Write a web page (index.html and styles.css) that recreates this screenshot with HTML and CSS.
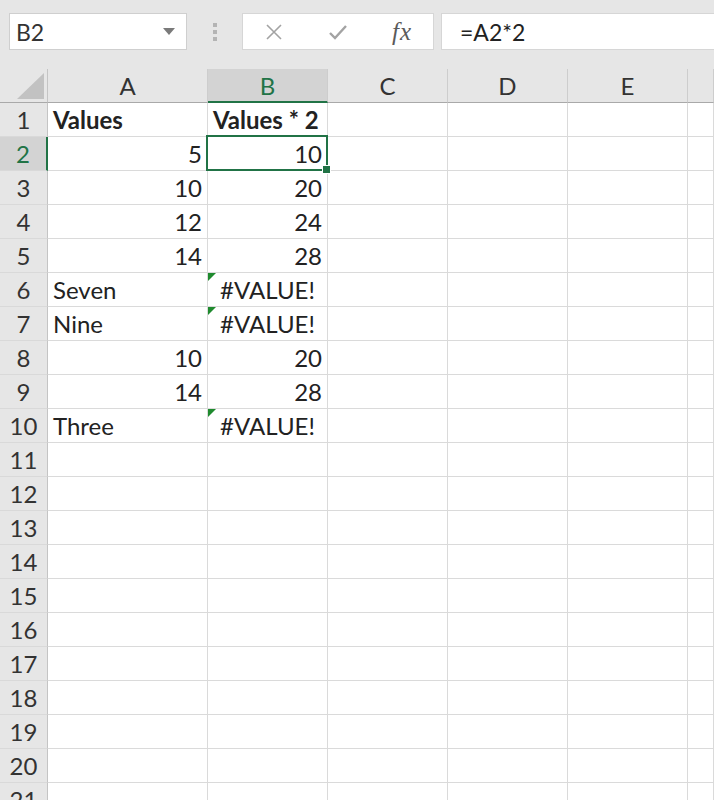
FILE: index.html
```html
<!DOCTYPE html>
<html lang="en">
<head>
  <meta charset="UTF-8">
  <title>Sheet1</title>
  <link rel="stylesheet" href="styles.css">
</head>
<body>
  <!-- formula bar -->
  <div class="toolbar">
    <div class="namebox">
      <span>B2</span>
      <svg class="caret" width="12" height="7" viewBox="0 0 12 7"><path d="M0 0h12L6 7z" fill="#7a7a7a"/></svg>
    </div>
    <div class="grip"><i></i><i></i><i></i></div>
    <div class="fx-buttons">
      <svg class="btn" width="18" height="18" viewBox="0 0 18 18"><path d="M2 2l14 14M16 2L2 16" stroke="#a3a3a3" stroke-width="1.6" fill="none"/></svg>
      <svg class="btn" width="20" height="16" viewBox="0 0 20 16"><path d="M2 9l5 5L18 2" stroke="#a3a3a3" stroke-width="2.4" fill="none"/></svg>
      <span class="fx">fx</span>
    </div>
    <div class="formula">=A2*2</div>
  </div>

  <div class="sheet">
    <div class="corner"></div>
    <div class="colhead">A</div>
    <div class="colhead active">B</div>
    <div class="colhead">C</div>
    <div class="colhead">D</div>
    <div class="colhead">E</div>
    <div class="colhead"></div>
  </div>
  <div class="sheet" id="rows"></div>

  <script>
    const data = [
      [{t: 'Values', c: 'bold'}, {t: 'Values * 2', c: 'bold'}],
      [5, 10],
      [10, 20],
      [12, 24],
      [14, 28],
      ['Seven', '#VALUE!'],
      ['Nine', '#VALUE!'],
      [10, 20],
      [14, 28],
      ['Three', '#VALUE!']
    ];

    const rows = document.getElementById('rows');
    for (let r = 1; r <= 21; r++) {
      const head = document.createElement('div');
      head.className = 'rowhead' + (r === 2 ? ' active' : '');
      head.textContent = r;
      rows.appendChild(head);

      const vals = data[r - 1] || [];
      for (let c = 0; c < 6; c++) {
        const cell = document.createElement('div');
        cell.className = 'cell';
        let v = vals[c];
        if (v && typeof v === 'object') { cell.classList.add(v.c); v = v.t; }
        if (typeof v === 'number') cell.classList.add('num');
        if (v === '#VALUE!') cell.classList.add('err');
        if (r === 2 && c === 1) cell.classList.add('selected');
        if (v !== undefined) cell.textContent = v;
        rows.appendChild(cell);
      }
    }
  </script>
</body>
</html>
```

FILE: styles.css
```css
* { margin: 0; padding: 0; box-sizing: border-box; }
html, body { height: 100%; }
body {
  background: #fff;
  font-family: Lato, "Open Sans", sans-serif;
  color: #222;
  overflow: hidden;
}

/* formula bar */
.toolbar {
  height: 69px;
  background: #e6e6e6;
  display: flex;
  align-items: flex-start;
  padding-top: 13px;
  padding-left: 9px;
}
.namebox {
  width: 178px;
  height: 37px;
  background: #fff;
  border: 1px solid #cfcfcf;
  display: flex;
  align-items: center;
  justify-content: space-between;
  padding: 0 11px 0 6px;
  font-size: 23px;
  color: #333;
}
.grip {
  width: 55px;
  height: 37px;
  display: flex;
  flex-direction: column;
  align-items: center;
  justify-content: center;
  gap: 3px;
}
.grip i {
  width: 4px;
  height: 4px;
  background: #b4b4b4;
}
.fx-buttons {
  width: 192px;
  height: 37px;
  background: #fff;
  border: 1px solid #d6d6d6;
  display: flex;
  align-items: center;
  padding-left: 22px;
}
.fx-buttons .btn { margin-right: 45px; }
.fx-buttons .btn + .btn { margin-right: 44px; }
.fx {
  font-family: "Liberation Serif", serif;
  font-style: italic;
  font-size: 25px;
  color: #5a5a5a;
  letter-spacing: 1px;
}
.formula {
  flex: 1;
  height: 37px;
  margin-left: 7px;
  background: #fff;
  border: 1px solid #d6d6d6;
  border-right: none;
  display: flex;
  align-items: center;
  padding-left: 18px;
  font-size: 23px;
  color: #222;
}

/* grid */
.sheet {
  display: grid;
  grid-template-columns: 48px 160px 120px 120px 120px 120px 26px;
  grid-auto-rows: 34px;
  font-size: 24px;
}
.sheet:first-of-type { grid-auto-rows: 33px; }

.corner {
  background: #e6e6e6;
  border-right: 1px solid #c4c4c4;
  border-bottom: 1px solid #a9a9a9;
  position: relative;
}
.corner::after {
  content: "";
  position: absolute;
  right: 3px;
  bottom: 3px;
  border-style: solid;
  border-width: 0 0 26px 27px;
  border-color: transparent transparent #c2c2c2 transparent;
}
.colhead {
  background: #e6e6e6;
  border-right: 1px solid #cdcdcd;
  border-bottom: 1px solid #a9a9a9;
  display: flex;
  align-items: center;
  justify-content: center;
  color: #333;
}
.colhead.active {
  background: #d3d3d3;
  color: #217346;
  border-bottom: 2px solid #217346;
}

.rowhead {
  background: #e6e6e6;
  border-right: 1px solid #c4c4c4;
  border-bottom: 1px solid #d9d9d9;
  display: flex;
  align-items: center;
  justify-content: center;
  color: #333;
}
.rowhead.active {
  background: #d3d3d3;
  color: #217346;
  border-right: 2px solid #217346;
}

.cell {
  border-right: 1px solid #dadada;
  border-bottom: 1px solid #dadada;
  display: flex;
  align-items: center;
  padding: 0 5px;
  white-space: nowrap;
  position: relative;
}
.cell.num { justify-content: flex-end; }
.cell.bold { font-weight: bold; }
.cell.err { justify-content: center; }
.cell.err::before {
  content: "";
  position: absolute;
  left: 0;
  top: 0;
  border-style: solid;
  border-width: 8px 8px 0 0;
  border-color: #1f8a2e transparent transparent transparent;
}
.cell.selected::after {
  content: "";
  position: absolute;
  left: -2px;
  top: -2px;
  right: -1px;
  bottom: -1px;
  border: 2px solid #217346;
}
.cell.selected::before {
  content: "";
  position: absolute;
  right: -4px;
  bottom: -4px;
  width: 7px;
  height: 7px;
  background: #217346;
  border: 1px solid #fff;
  z-index: 2;
}
```
